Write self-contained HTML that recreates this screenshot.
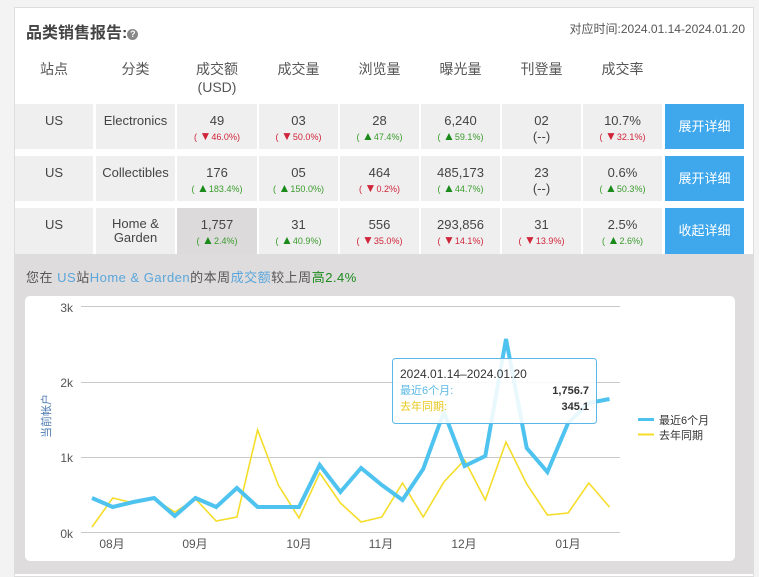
<!DOCTYPE html>
<html><head><meta charset="utf-8"><style>
*{margin:0;padding:0;box-sizing:border-box}
body{width:759px;height:569px;overflow:hidden;background:#f3f3f3;font-family:"Liberation Sans","Noto Sans CJK SC",sans-serif;color:#333;position:relative}
.panel{position:absolute;left:14px;top:7px;width:740px;height:570px;background:#fff;border:1px solid #ddd}
.abs{position:absolute}
.title{left:26px;top:19px;font-size:16px;font-weight:bold;color:#444}
.date{right:14px;top:20px;font-size:12px;color:#555}
.hd{position:absolute;top:60px;font-size:14px;color:#555;text-align:center;line-height:18px}
.cell{position:absolute;background:#efefef;text-align:center;font-size:13px;color:#444;padding-top:9px;line-height:16px}
.sub{font-size:9px;line-height:14px}
.r{color:#d0243a}.g{color:#3a9b2c}
.tr{color:#d0243a;font-size:12px}.tg{color:#1a8a1a;font-size:12px}
.btn{position:absolute;background:#3fa7ec;color:#fff;font-size:13px;text-align:center}
.detail{position:absolute;left:15px;top:254px;width:738px;height:320px;background:#dedcdc}
</style></head><body>
<div class="panel"></div>
<div class="abs title">品类销售报告:<span style="display:inline-block;width:11px;height:11px;border-radius:50%;background:#888;color:#fff;font-size:9px;line-height:11px;text-align:center;vertical-align:1px">?</span></div>
<div class="abs date">对应时间:2024.01.14-2024.01.20</div>
<div class="hd" style="left:14px;width:80px">站点</div>
<div class="hd" style="left:96px;width:79px">分类</div>
<div class="hd" style="left:177px;width:80px">成交额<br>(USD)</div>
<div class="hd" style="left:259px;width:79px">成交量</div>
<div class="hd" style="left:340px;width:79px">浏览量</div>
<div class="hd" style="left:421px;width:79px">曝光量</div>
<div class="hd" style="left:502px;width:79px">刊登量</div>
<div class="hd" style="left:583px;width:79px">成交率</div>

<div class="cell" style="left:15px;top:104px;width:78px;height:45px">US</div>
<div class="cell" style="left:96px;top:104px;width:79px;height:45px">Electronics</div>
<div class="cell" style="left:177px;top:104px;width:80px;height:45px">49<div class="sub r">( <span class="tr">▼</span>46.0%)</div></div>
<div class="cell" style="left:259px;top:104px;width:79px;height:45px">03<div class="sub r">( <span class="tr">▼</span>50.0%)</div></div>
<div class="cell" style="left:340px;top:104px;width:79px;height:45px">28<div class="sub g">( <span class="tg">▲</span>47.4%)</div></div>
<div class="cell" style="left:421px;top:104px;width:79px;height:45px">6,240<div class="sub g">( <span class="tg">▲</span>59.1%)</div></div>
<div class="cell" style="left:502px;top:104px;width:79px;height:45px">02<div>(--)</div></div>
<div class="cell" style="left:583px;top:104px;width:79px;height:45px">10.7%<div class="sub r">( <span class="tr">▼</span>32.1%)</div></div>
<div class="btn" style="left:665px;top:104px;width:79px;height:45px;line-height:45px">展开详细</div>

<div class="cell" style="left:15px;top:156px;width:78px;height:45px">US</div>
<div class="cell" style="left:96px;top:156px;width:79px;height:45px">Collectibles</div>
<div class="cell" style="left:177px;top:156px;width:80px;height:45px">176<div class="sub g">( <span class="tg">▲</span>183.4%)</div></div>
<div class="cell" style="left:259px;top:156px;width:79px;height:45px">05<div class="sub g">( <span class="tg">▲</span>150.0%)</div></div>
<div class="cell" style="left:340px;top:156px;width:79px;height:45px">464<div class="sub r">( <span class="tr">▼</span>0.2%)</div></div>
<div class="cell" style="left:421px;top:156px;width:79px;height:45px">485,173<div class="sub g">( <span class="tg">▲</span>44.7%)</div></div>
<div class="cell" style="left:502px;top:156px;width:79px;height:45px">23<div>(--)</div></div>
<div class="cell" style="left:583px;top:156px;width:79px;height:45px">0.6%<div class="sub g">( <span class="tg">▲</span>50.3%)</div></div>
<div class="btn" style="left:665px;top:156px;width:79px;height:45px;line-height:45px">展开详细</div>

<div class="cell" style="left:15px;top:208px;width:78px;height:46px">US</div>
<div class="cell" style="left:96px;top:208px;width:79px;height:46px;line-height:14px">Home &amp;<br>Garden</div>
<div class="cell" style="left:177px;top:208px;width:80px;height:46px;background:#dcdada">1,757<div class="sub g">( <span class="tg">▲</span>2.4%)</div></div>
<div class="cell" style="left:259px;top:208px;width:79px;height:46px">31<div class="sub g">( <span class="tg">▲</span>40.9%)</div></div>
<div class="cell" style="left:340px;top:208px;width:79px;height:46px">556<div class="sub r">( <span class="tr">▼</span>35.0%)</div></div>
<div class="cell" style="left:421px;top:208px;width:79px;height:46px">293,856<div class="sub r">( <span class="tr">▼</span>14.1%)</div></div>
<div class="cell" style="left:502px;top:208px;width:79px;height:46px">31<div class="sub r">( <span class="tr">▼</span>13.9%)</div></div>
<div class="cell" style="left:583px;top:208px;width:79px;height:46px">2.5%<div class="sub g">( <span class="tg">▲</span>2.6%)</div></div>
<div class="btn" style="left:665px;top:208px;width:79px;height:46px;line-height:46px">收起详细</div>

<div class="detail"></div>
<div class="abs" style="left:26px;top:267px;font-size:13px;color:#555;letter-spacing:0.5px">您在 <span style="color:#5aa6dc">US</span>站<span style="color:#5aa6dc">Home &amp; Garden</span>的本周<span style="color:#5aa6dc">成交额</span>较上周<span style="color:#1a8a1a">高2.4%</span></div>
<div class="abs" style="left:25px;top:296px;width:710px;height:265px;background:#fff;border-radius:5px"></div>

<svg class="abs" style="left:0;top:0" width="759" height="569" font-family="Liberation Sans,Noto Sans CJK SC,sans-serif">
<g stroke="#c8c8c8" stroke-width="1">
<line x1="81" y1="306.5" x2="620" y2="306.5"/><line x1="81" y1="382.5" x2="620" y2="382.5"/><line x1="81" y1="457.5" x2="620" y2="457.5"/><line x1="81" y1="532.5" x2="620" y2="532.5"/>
</g>
<g font-size="12" fill="#555" text-anchor="end">
<text x="73" y="312">3k</text><text x="73" y="387">2k</text><text x="73" y="462">1k</text><text x="73" y="538">0k</text>
</g>
<g font-size="12" fill="#555" text-anchor="middle">
<text x="112" y="548">08月</text><text x="195" y="548">09月</text><text x="299" y="548">10月</text><text x="381" y="548">11月</text><text x="464" y="548">12月</text><text x="568" y="548">01月</text>
</g>
<text transform="translate(50,416) rotate(-90)" font-size="11" fill="#4a78b0" text-anchor="middle">当前帐户</text>
<polyline fill="none" stroke="#f5dd2a" stroke-width="1.6" points="92,527 112.7,498 133.4,503 154.1,499 174.8,512 195.5,499 216.2,521 236.9,517 257.6,430 278.3,485 299,518 319.7,473 340.4,503 361.1,522 381.8,517 402.5,483 423.2,517 443.9,482 464.6,460 485.3,500 506,442 526.7,484 547.4,515 568.1,513 588.8,483 609.5,507"/>
<polyline fill="none" stroke="#4fc3ef" stroke-width="4" points="92,498 112.7,507 133.4,502 154.1,498 174.8,516 195.5,498 216.2,507 236.9,488 257.6,507 278.3,507 299,507 319.7,465 340.4,492 361.1,468 381.8,485 402.5,500 423.2,469 443.9,412 464.6,466 485.3,456 506,339 526.7,448 547.4,472 568.1,423 588.8,403 609.5,399"/>
<rect x="392.5" y="358.5" width="204" height="65" rx="3" fill="rgba(255,255,255,0.88)" stroke="#5ab8e6"/>
<text x="400" y="378" font-size="12" fill="#333">2024.01.14–2024.01.20</text>
<text x="400" y="394" font-size="11" fill="#5ab8e6">最近6个月:</text>
<text x="589" y="394" font-size="11" fill="#333" font-weight="bold" text-anchor="end">1,756.7</text>
<text x="400" y="410" font-size="11" fill="#e8c820">去年同期:</text>
<text x="589" y="410" font-size="11" fill="#333" font-weight="bold" text-anchor="end">345.1</text>
<line x1="638" y1="419.5" x2="654" y2="419.5" stroke="#4fc3ef" stroke-width="3"/>
<line x1="638" y1="434.5" x2="654" y2="434.5" stroke="#f5dd2a" stroke-width="2"/>
<text x="659" y="424" font-size="11" fill="#333">最近6个月</text>
<text x="659" y="439" font-size="11" fill="#333">去年同期</text>
</svg>
</body></html>
